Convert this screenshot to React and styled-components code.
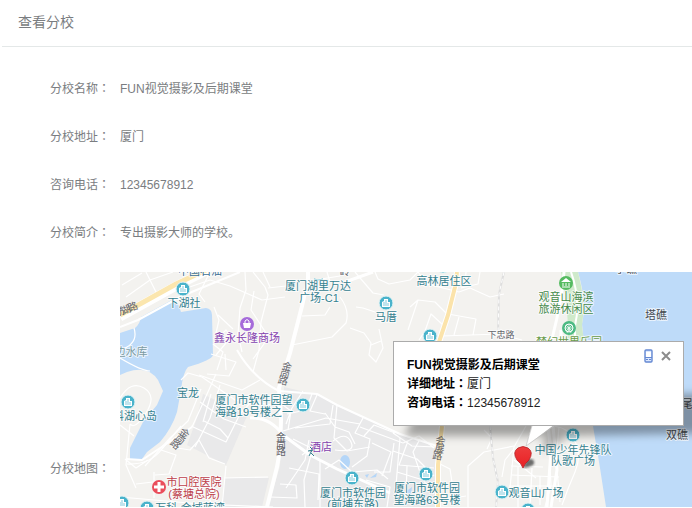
import React from "react";
import styled, { createGlobalStyle } from "styled-components";

const GlobalStyle = createGlobalStyle`
  * { box-sizing: border-box; }
  body {
    margin: 0;
    background: #fff;
    color: #7a7d81;
    font-family: "Liberation Sans", "Noto Sans CJK SC", sans-serif;
    font-size: 12px;
    font-weight: 400;
  }
`;

const Panel = styled.main`
  padding: 0 0 1px 2px;
`;

const PanelHeader = styled.header`
  display: flex;
  align-items: center;
  height: 47px;
  padding: 0 16px 2px;
  border-bottom: 1px solid #e4e8e8;
`;

const Title = styled.h1`
  margin: 0;
  font-size: 14px;
  font-weight: 400;
  line-height: 20px;
`;

const Details = styled.dl`
  margin: 0;
  padding: 18px 0 0 48px;
`;

const Row = styled.div`
  display: flex;
  align-items: ${(p) => (p.$map ? "stretch" : "center")};
  min-height: 48px;
`;

const Label = styled.dt`
  flex: 0 0 70px;
  line-height: 20px;
  padding-top: ${(p) => (p.$map ? "202px" : "0")};
`;

const Colon = styled.span`
  font-family: "Noto Sans CJK TC", sans-serif;
  line-height: 1;
`;

const Value = styled.dd`
  flex: 1;
  min-width: 0;
  margin: 0;
  line-height: 20px;
`;

const MapView = styled.div`
  position: relative;
  height: 235px;
  margin-top: 15px;
  overflow: hidden;
  background: #f3f2ef;
`;

const MapCanvas = styled.svg`
  display: block;
  width: 100%;
  height: 100%;
  font-family: "Liberation Sans", "Noto Sans CJK SC", sans-serif;
  font-size: 11px;
  font-weight: 400;
`;

const InfoWindow = styled.section`
  position: absolute;
  top: 69px;
  left: 273px;
  width: 291px;
  height: 85px;
  padding: 14px 13px;
  border: 1px solid #ababab;
  background: #fff;
  color: #222;
`;

const InfoTitle = styled.h2`
  margin: 0;
  color: #000;
  font-size: 12px;
  font-weight: 700;
  line-height: 19px;
`;

const InfoLine = styled.p`
  margin: 0;
  line-height: 19px;

  strong {
    color: #000;
    font-weight: 700;
  }
`;

const InfoActions = styled.div`
  position: absolute;
  top: 6px;
  right: 10px;
  display: flex;
  gap: 4px;
`;

const IconButton = styled.button`
  display: grid;
  place-items: center;
  width: 14px;
  height: 16px;
  padding: 0;
  border: 0;
  background: none;
  cursor: pointer;
`;

const fields = [
  ["分校名称", "FUN视觉摄影及后期课堂"],
  ["分校地址", "厦门"],
  ["咨询电话", "12345678912"],
  ["分校简介", "专出摄影大师的学校。"],
];

const TEAL = "#34818f";
const GREEN = "#458a4b";
const PURPLE = "#8442ae";
const RED = "#bd3f4b";
const GREY = "#66676d";
const DARK = "#444a50";

const labels = [
  { x: 200, y: 275, text: "中国石油", color: "#3e7196" },
  { x: 184, y: 307, text: "下湖社" },
  { x: 318, y: 290, text: "厦门湖里万达" },
  { x: 319, y: 302, text: "广场-C1" },
  { x: 345, y: 275, text: "岭", color: GREY },
  { x: 386, y: 321, text: "马厝" },
  { x: 444, y: 285, text: "高林居住区" },
  { x: 247, y: 342, text: "鑫永长隆商场", color: PURPLE },
  { x: 131, y: 356, text: "边水库", color: "#7c9ba2" },
  { x: 188, y: 397, text: "宝龙" },
  { x: 254, y: 404, text: "厦门市软件园望" },
  { x: 254, y: 416, text: "海路19号楼之一" },
  { x: 135, y: 420, text: "科湖心岛" },
  { x: 321, y: 451, text: "酒店", color: PURPLE },
  { x: 194, y: 486, text: "市口腔医院", color: RED },
  { x: 194, y: 498, text: "(蔡塘总院)", color: RED },
  { x: 190, y: 512, text: "万科·金域蓝湾" },
  { x: 353, y: 497, text: "厦门市软件园" },
  { x: 353, y: 508, text: "(前埔东路)" },
  { x: 427, y: 492, text: "厦门市软件园" },
  { x: 427, y: 504, text: "望海路63号楼" },
  { x: 536, y: 497, text: "观音山广场" },
  { x: 573, y: 454, text: "中国少年先锋队" },
  { x: 573, y: 465, text: "队歌广场" },
  { x: 566, y: 301, text: "观音山海滨", color: GREEN },
  { x: 566, y: 313, text: "旅游休闲区", color: GREEN },
  { x: 569, y: 346, text: "梦幻世界乐园", color: "#689b4a" },
  { x: 656, y: 319, text: "塔礁", color: DARK },
  { x: 677, y: 439, text: "双礁", color: DARK },
  { x: 687, y: 408, text: "尾", color: DARK },
  { x: 626, y: 273, text: "小礁", color: DARK },
  { x: 501, y: 338, text: "下忠路", color: GREY, size: 9 },
];

const roadNames = [
  { chars: "金尚路", at: [[286, 370], [284, 377], [282, 384]], turn: 14 },
  { chars: "金尚路", at: [[281, 441], [281, 448], [281, 455]], turn: 0 },
  { chars: "金尚路", at: [[182, 436], [178, 442], [173, 447]], turn: 40 },
  { chars: "会展路", at: [[440, 444], [439, 452], [437, 459]], turn: 10 },
  { chars: "枋湖路", at: [[121, 315], [127, 313], [134, 310]], turn: -20 },
];

const places = [
  [183, 289], [386, 303], [430, 336], [128, 402], [303, 405], [352, 478],
  [426, 474], [502, 492], [573, 435], [122, 503], [147, 508], [528, 510],
  [443, 266],
];

const minorRoads = [
  "M126 297L150 280 173 272M122 285L142 273M120 350Q139 344 134 328M146 272L158 296",
  "M181 290L210 280 230 286 262 300 285 297M210 272L199 294 205 302M214 307L219 320 216 333M218 315L233 329",
  "M245 272L246 290 240 308 238 334 242 352M254 291L251 310 266 333 264 344 253 359",
  "M253 272L265 287 268 295 261 322 259 350 253 372",
  "M268 288L295 285M263 272L270 287M315 280L340 276M327 272L330 282",
  "M302 316L325 315 330 307M340 297Q350 310 346 323L332 337 292 345M355 272L373 293 384 295",
  "M350 328L364 333 371 343 369 355 376 362 383 348 379 329M375 272L378 279 389 284 410 280 418 272",
  "M381 341L371 345M375 312L363 308 356 307M410 307L418 300 435 302 448 315M418 300L408 330",
  "M418 272L427 284 459 292 470 288 490 297 504 294M448 314L476 319 473 335M442 336L499 334 522 340M459 317L454 335",
  "M465 285L466 272M480 272L478 284 461 288M443 325L431 314 425 331 419 340",
  "M213 344L223 352 217 370M211 354L236 362 229 376 207 374M199 375L242 390 260 380M216 374L203 403 192 427",
  "M181 380L188 373 202 377 235 400 253 404M211 394L203 422M201 389L188 421 170 438 145 466",
  "M191 426L226 442 240 414 251 402 280 406M204 421L220 429 228 438M200 402L224 419 246 427M220 385L210 418 195 447",
  "M161 450L176 455 169 474 155 475M171 447L190 450 199 440M199 440L209 458 225 464M125 459L136 468 148 460",
  "M127 464Q150 465 162 449L181 426M120 398Q131 380 144 388T146 413T130 424M130 424L126 465 136 488M120 425L134 436",
  "M226 466L222 507M224 478L268 477M136 484L153 482M154 472V498M209 490L211 507M120 497L200 504 273 507",
  "M283 405L291 411 288 430M303 391L292 408 286 424M312 394L306 410 287 414M333 405L330 424 295 428M283 431L326 418 360 424",
  "M317 395L310 411 325 414M325 413L335 427 349 432 355 444M337 405L334 438 347 451 370 447",
  "M333 441Q346 431 351 442T335 450M363 418L355 433 370 439 367 456 352 467M364 436L374 425 395 433",
  "M360 427L403 443 419 436 434 448M372 443L391 452 382 476M394 443L390 472 374 472",
  "M320 460L320 507M311 455L304 480 305 507M289 468L319 474 318 500M293 439L311 448 302 455M280 484L296 485 297 498 270 497",
  "M309 440L305 460 286 488M325 469L339 460 352 472 377 470 388 479M366 480L390 487 387 507M400 438L396 485",
  "M393 433L412 446 436 447M408 441L399 465 434 468M393 451L417 459 434 476M420 439L413 452 421 475M407 466L406 497M397 472L423 480 434 494",
  "M440 464L450 469 452 482 440 491M441 500L466 496M468 507V466L484 452 514 446M484 430L492 438 487 449",
  "M526 426L514 447 510 488M514 460L536 478M532 468L530 507M540 476V505M548 430L551 485 545 507M559 427L556 460 560 502",
  "M513 450L505 460 502 477M511 466L543 467M512 475L559 477M509 486L561 486M518 467V507M550 426Q568 426 575 441T575 472T562 505",
  "M120 358Q142 371 150 371M220 336L226 330 231 337 216 355M225 354L226 370",
];

const greyBlocks = [
  "M284 387L318 395 337 406 400 434 436 445 436 507 268 507 280 466Z",
  "M203 394L247 416 226 465 187 445 196 421Z",
  "M225 478H269L262 507H221Z",
];

function PlaceMarker({ x, y }) {
  return (
    <g transform={`translate(${x} ${y})`}>
      <circle r="7" fill="#4ab3cb" stroke="#e7f5f6" strokeWidth="1" />
      <path d="M-4 4V-1L-2-2V-4L2-4V-1H4V4Z" fill="#fff" />
      <path d="M-2-1V3M0-3V3M2 0V3" stroke="#4ab3cb" strokeWidth=".7" />
    </g>
  );
}

function MapDrawing() {
  return (
    <MapCanvas
      viewBox="120 272 572 235"
      preserveAspectRatio="xMinYMin slice"
      role="img"
      aria-label="分校地图"
    >
      <defs>
        <filter id="soft" x="-20%" y="-50%" width="140%" height="200%">
          <feGaussianBlur stdDeviation="4" />
        </filter>
        <filter id="pinSoft">
          <feGaussianBlur stdDeviation="1" />
        </filter>
        <linearGradient id="pinFill" x1="0" y1="0" x2="0" y2="1">
          <stop offset="0" stopColor="#ed3d3d" />
          <stop offset="1" stopColor="#e92024" />
        </linearGradient>
      </defs>

      <rect x="120" y="272" width="572" height="235" fill="#f3f2ef" />
      {greyBlocks.map((d) => (
        <path key={d} d={d} fill="#e9e9ea" />
      ))}
      <path
        d="M120 333L135 328Q140 324 141 317L170 301 173 298Q179 304 181 312L206 308Q212 309 212 315L213 355Q212 360 188 367Q183 372 181 390L177 412Q172 428 160 442L147 452 142 459H130V448L143 422 157 405 163 391 158 380Q148 365 127 372L120 375Z"
        fill="#bedbf9"
      />
      <path d="M578 272Q587 302 582 324L593 426 600 468 606 507H692V272Z" fill="#bedbf9" />
      <path d="M561 272H578Q586 302 582 326L584 341H567Q570 315 561 272Z" fill="#cfeacb" />
      <ellipse cx="345" cy="462" rx="5" ry="7" fill="#b5d6f8" />
      <path d="M365 475L369 474 367 478ZM370 478L377 473 376 477ZM405 492L412 487 411 494Z" fill="#b5d6f8" />

      <g fill="none" stroke="#fff" strokeLinejoin="round">
        <g strokeWidth="1.2">
          {minorRoads.map((d) => (
            <path key={d} d={d} />
          ))}
        </g>
        <g strokeWidth="3">
          <path d="M308 272V279L302 306 290 353 279 388 281 420 280 450 277 467 267 507" strokeWidth="4" />
          <path d="M250 418Q270 417 283 435L310 455 337 469 390 493" />
          <path d="M237 350Q253 378 279 391L317 394 337 405 400 434 440 447" strokeWidth="2" />
          <path d="M120 327L138 320 182 296 240 272" strokeWidth="2" />
          <path d="M345 282L373 272" />
          <path d="M564 272Q562 300 552 339M561 330V341M548 426L551 450 547 507M553 426L557 470 551 507" />
          <path d="M571 272Q581 300 575 326V341" strokeWidth="2" />
          <path d="M126 459L142 460 192 427" strokeWidth="2" />
        </g>
        <path d="M120 317L176 286 208 270" strokeWidth="9" />
        <path d="M120 315L176 284 208 269" stroke="#fbe6ae" strokeWidth="5" />
        <path d="M457 272L455 287 448 315 439 342M442 426L438 465V507" strokeWidth="6" />
        <path d="M457 272L455 287 448 315 439 342M442 426L438 465V507" stroke="#fbe3aa" strokeWidth="4" />
        <path d="M504 272L499 294 498 334M490 426L493 458 498 482 496 507" stroke="#dedede" strokeWidth="2" />
        <path d="M504 272L499 294 498 334M490 426L493 458 498 482 496 507" strokeDasharray="4 3" />
      </g>

      {places.map(([x, y]) => (
        <PlaceMarker key={`${x}-${y}`} x={x} y={y} />
      ))}
      <path d="M314 279Q318 281 323 279" fill="none" stroke="#4ab3cb" />
      <g transform="translate(247 324)">
        <circle r="7" fill="#a66cda" />
        <path d="M-4-1H4L3 4H-3Z" fill="#fff" />
        <path d="M-2-1V-3Q0-6 2-3V-1" fill="none" stroke="#fff" />
      </g>
      <g transform="translate(159 487)">
        <circle r="7" fill="#ea4e5c" />
        <path d="M-5 0H5M0-5V5" stroke="#fff" strokeWidth="3" />
      </g>
      <g transform="translate(566 283)">
        <circle r="7" fill="#55bb61" />
        <path d="M-5-1L0-5 5-1Z" fill="#fff" />
        <path d="M-3 0V3M0 0V3M3 0V3M-4 4H4" stroke="#fff" />
      </g>
      <g transform="translate(569 328)" fill="none" stroke="#fff">
        <circle r="7" fill="#4dba83" stroke="none" />
        <circle r="4" />
        <path d="M-4 0H4M0-4V4M-3-3L3 3M3-3L-3 3M-2 5L0 1 2 5" strokeWidth=".7" />
      </g>

      <g textAnchor="middle" stroke="#fff" strokeWidth="2" strokeOpacity=".7" paintOrder="stroke" strokeLinejoin="round">
        {labels.map((l) => (
          <text key={`${l.x}-${l.y}`} x={l.x} y={l.y} fill={l.color || TEAL} fontSize={l.size || 11}>
            {l.text}
          </text>
        ))}
        {roadNames.map((road) =>
          road.at.map(([x, y], i) => (
            <text
              key={`${x}-${y}`}
              transform={`translate(${x} ${y}) rotate(${road.turn})`}
              fill={GREY}
              fontSize="10"
              strokeWidth="0"
            >
              {road.chars[i]}
            </text>
          ))
        )}
      </g>
      <path d="M310 447L312 449M308 451L313 450M312 450L309 456M311 453L314 456" stroke={TEAL} fill="none" />

      <path d="M404 436L426 394H710V433L568 436 542 452 546 436Z" fill="#000" fillOpacity=".34" filter="url(#soft)" />
      <path d="M532 425L526 446 554 425Z" fill="#fff" />
      <path d="M532 426L526 446 554 426" fill="none" stroke="#bbb" strokeWidth=".6" />
      <path d="M523 468L526 460Q535 457 534 464Q531 467 523 468Z" fill="#333" fillOpacity=".7" filter="url(#pinSoft)" />
      <path
        d="M523 468Q521 463 517 460Q512 452 518 448Q523 445 528 448Q534 452 529 460Q525 463 523 468Z"
        fill="url(#pinFill)"
        stroke="#b62025"
        strokeWidth=".8"
      />
    </MapCanvas>
  );
}

function BranchInfo() {
  return (
    <InfoWindow aria-label="分校信息">
      <InfoTitle>FUN视觉摄影及后期课堂</InfoTitle>
      <InfoLine>
        <strong>
          详细地址<Colon>：</Colon>
        </strong>
        厦门
      </InfoLine>
      <InfoLine>
        <strong>
          咨询电话<Colon>：</Colon>
        </strong>
        12345678912
      </InfoLine>
      <InfoActions>
        <IconButton type="button" aria-label="发送到手机">
          <svg width="9" height="14" viewBox="0 0 9 14">
            <rect x="1" y="1" width="7" height="12" rx="1" fill="#dce8ff" stroke="#6488d2" strokeWidth="1.4" />
            <rect x="2" y="3" width="5" height="5" fill="#fff" />
            <path d="M1 8.5H8M2 10.5H4M5 10.5H7" stroke="#6488d2" />
          </svg>
        </IconButton>
        <IconButton type="button" aria-label="关闭">
          <svg width="10" height="10" viewBox="0 0 10 10">
            <path d="M1 1L9 9M9 1L1 9" stroke="#8c8c8c" strokeWidth="2" />
          </svg>
        </IconButton>
      </InfoActions>
    </InfoWindow>
  );
}

export default function App() {
  return (
    <>
      <GlobalStyle />
      <Panel>
        <PanelHeader>
          <Title>查看分校</Title>
        </PanelHeader>
        <Details>
          {fields.map(([name, value]) => (
            <Row key={name}>
              <Label>
                {name}
                <Colon>：</Colon>
              </Label>
              <Value>{value}</Value>
            </Row>
          ))}
          <Row $map>
            <Label $map>
              分校地图<Colon>：</Colon>
            </Label>
            <Value>
              <MapView>
                <MapDrawing />
                <BranchInfo />
              </MapView>
            </Value>
          </Row>
        </Details>
      </Panel>
    </>
  );
}
